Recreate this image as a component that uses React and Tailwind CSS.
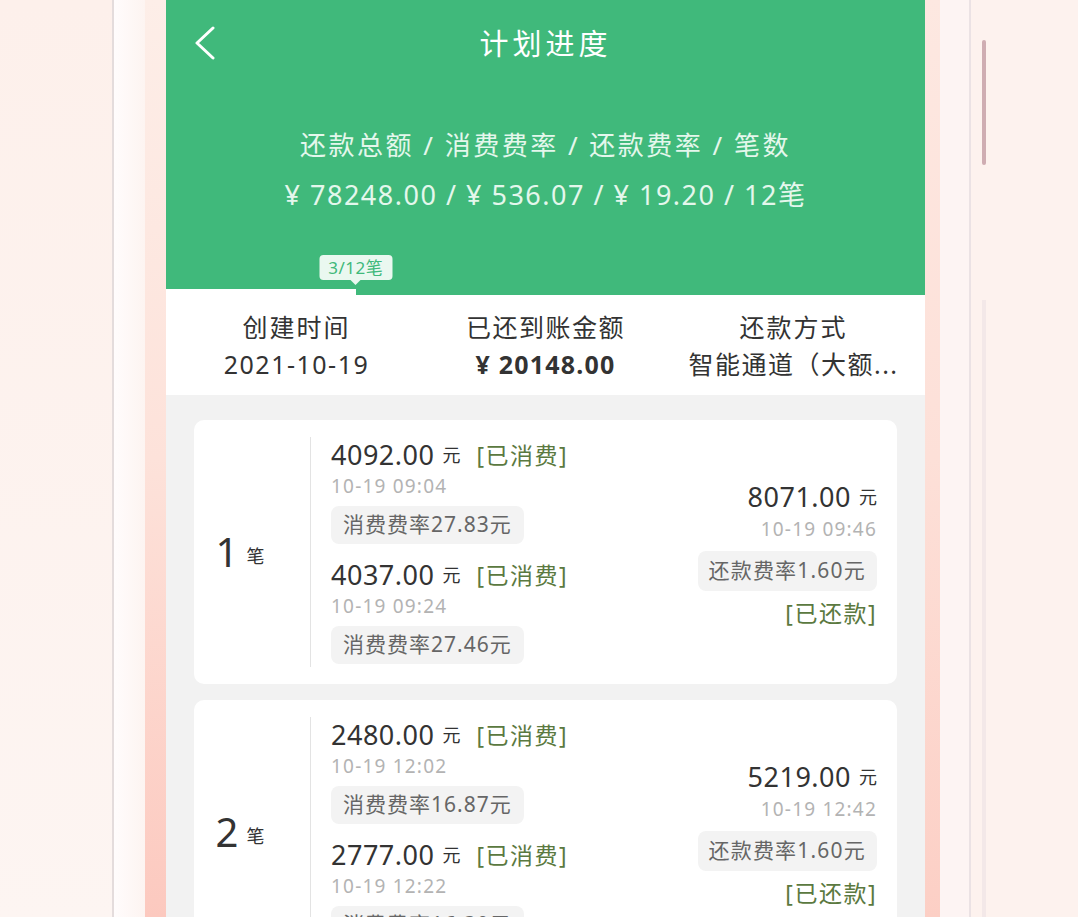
import React from 'react';

const records = [
    {
        no: 1,
        spends: [
            { amount: '4092.00', time: '10-19 09:04', fee: '27.83' },
            { amount: '4037.00', time: '10-19 09:24', fee: '27.46' },
        ],
        repay: { amount: '8071.00', time: '10-19 09:46', fee: '1.60' },
    },
    {
        no: 2,
        spends: [
            { amount: '2480.00', time: '10-19 12:02', fee: '16.87' },
            { amount: '2777.00', time: '10-19 12:22', fee: '16.30' },
        ],
        repay: { amount: '5219.00', time: '10-19 12:42', fee: '1.60' },
    },
];

function BackIcon() {
    return (
        <svg width="22" height="34" viewBox="0 0 22 34" fill="none">
            <polyline points="19,2 3,17 19,32" stroke="white" strokeWidth="3" strokeLinecap="round" strokeLinejoin="round" />
        </svg>
    );
}

function SpendItem({ item, first }) {
    return (
        <div className={first ? '' : 'mt-[14px]'}>
            <div className="flex items-center h-[34px]">
                <span className="text-[27px] text-[#333] tracking-[0.5px]">{item.amount}</span>
                <span className="text-[18px] text-[#333] ml-[8px]">元</span>
                <span className="text-[23px] text-[#5b7940] ml-[16px] tracking-[1.5px]">[已消费]</span>
            </div>
            <div className="h-[28px] flex items-center text-[19px] text-[#b3b3b3] tracking-[1.2px]">{item.time}</div>
            <div className="mt-[6px] inline-flex items-center h-[38px] px-[12px] rounded-[8px] bg-[#f3f3f3] text-[21px] text-[#666] tracking-[1px]">
                消费费率{item.fee}元
            </div>
        </div>
    );
}

function RecordCard({ record }) {
    return (
        <div className="bg-white rounded-[10px] h-[264px] shrink-0 flex items-stretch py-[17px] pr-[20px]">
            <div className="w-[116px] flex items-center justify-center pr-[24px] shrink-0">
                <span className="text-[40px] text-[#333] leading-none">{record.no}</span>
                <span className="text-[18px] text-[#333] ml-[8px] mt-[8px]">笔</span>
            </div>
            <div className="w-px bg-[#e3e3e3] shrink-0" />
            <div className="pl-[20px] pt-[1px] flex-1">
                {record.spends.map((s, i) => (
                    <SpendItem key={i} item={s} first={i === 0} />
                ))}
            </div>
            <div className="flex flex-col items-end justify-center pt-[8px]">
                <div className="flex items-center h-[34px]">
                    <span className="text-[27px] text-[#333] tracking-[0.5px]">{record.repay.amount}</span>
                    <span className="text-[18px] text-[#333] ml-[8px]">元</span>
                </div>
                <div className="h-[30px] flex items-center text-[19px] text-[#b3b3b3] tracking-[1.2px]">{record.repay.time}</div>
                <div className="mt-[6px] inline-flex items-center h-[40px] px-[11px] rounded-[8px] bg-[#f3f3f3] text-[21px] text-[#666] tracking-[1.2px]">
                    还款费率{record.repay.fee}元
                </div>
                <div className="mt-[5px] h-[36px] flex items-center text-[23px] text-[#5b7940] tracking-[1.5px]">[已还款]</div>
            </div>
        </div>
    );
}

export default function App() {
    return (
        <div className="h-[917px] w-[1078px] overflow-hidden flex bg-[#fdf2ee] font-['Noto_Sans','Noto_Sans_CJK_SC',sans-serif]">
            {/* left phone bezel */}
            <div className="w-[112px] shrink-0 bg-gradient-to-b from-[#fdf0eb] to-[#fdf5f2]" />
            <div className="w-[2px] shrink-0 bg-[#e4dcdc]" />
            <div className="w-[31px] shrink-0 bg-gradient-to-r from-[#fffcfc] to-[#fdf4f1]" />
            <div className="w-[21px] shrink-0 bg-gradient-to-b from-[#fdeee8] via-[#fde2da] to-[#fcc9bf]" />

            {/* screen */}
            <div className="w-[759px] shrink-0 bg-[#f2f2f2] flex flex-col">
                <div className="bg-[#40b97b] flex flex-col shrink-0">
                    <div className="h-[87px] relative flex items-center justify-center">
                        <div className="absolute left-[28px] top-[26px]">
                            <BackIcon />
                        </div>
                        <span className="text-[29px] text-white tracking-[4px]">计划进度</span>
                    </div>
                    <div className="mt-[40px] h-[36px] flex items-center justify-center text-[26px] text-[#e4f7ec] tracking-[2.5px] whitespace-nowrap">
                        还款总额 / 消费费率 / 还款费率 / 笔数
                    </div>
                    <div className="mt-[12px] h-[40px] flex items-center justify-center text-[27px] text-[#e4f7ec] tracking-[1.5px] whitespace-nowrap">
                        ¥ 78248.00 / ¥ 536.07 / ¥ 19.20 / 12笔
                    </div>
                    <div className="h-[74px]" />
                    <div className="h-[6px] flex relative">
                        <div className="w-1/4 bg-white" />
                        <div className="absolute left-1/4 bottom-[10px] -translate-x-1/2 flex flex-col items-center">
                            <div className="h-[25px] px-[9px] rounded-[4px] bg-[#eaf8f0] text-[#40b97b] text-[17px] tracking-[0.5px] flex items-center">
                                3/12笔
                            </div>
                            <div className="w-0 h-0 border-l-[5px] border-r-[5px] border-t-[5px] border-l-transparent border-r-transparent border-t-[#eaf8f0]" />
                        </div>
                    </div>
                </div>

                <div className="bg-white h-[100px] shrink-0 grid grid-cols-3 pt-[16px]">
                    <div className="flex flex-col items-center pl-[8px]">
                        <div className="h-[34px] flex items-center text-[25px] text-[#333] tracking-[2px]">创建时间</div>
                        <div className="mt-[3px] h-[34px] flex items-center text-[25px] text-[#333] tracking-[1.5px]">2021-10-19</div>
                    </div>
                    <div className="flex flex-col items-center">
                        <div className="h-[34px] flex items-center text-[25px] text-[#333] tracking-[1.5px]">已还到账金额</div>
                        <div className="mt-[3px] h-[34px] flex items-center text-[25px] text-[#333] font-bold tracking-[1.2px]">¥ 20148.00</div>
                    </div>
                    <div className="flex flex-col items-center pr-[10px]">
                        <div className="h-[34px] flex items-center text-[25px] text-[#333] tracking-[2px]">还款方式</div>
                        <div className="mt-[3px] h-[34px] flex items-center text-[25px] text-[#333] tracking-[1.5px] whitespace-nowrap">智能通道（大额...</div>
                    </div>
                </div>

                <div className="px-[28px] pt-[25px] flex flex-col gap-[16px]">
                    {records.map(r => (
                        <RecordCard key={r.no} record={r} />
                    ))}
                </div>
            </div>

            {/* right phone bezel */}
            <div className="w-[15px] shrink-0 bg-gradient-to-b from-[#fde8e1] via-[#fde0d8] to-[#fccfc5]" />
            <div className="w-[29px] shrink-0 bg-[#fdf4f3]" />
            <div className="w-[2px] shrink-0 bg-[#ebe2e4]" />
            <div className="w-[11px] shrink-0" />
            <div className="w-[4px] shrink-0 flex flex-col">
                <div className="h-[40px]" />
                <div className="h-[125px] bg-[#cfadb2] rounded-[2px]" />
                <div className="h-[135px]" />
                <div className="flex-1 bg-[#f3e8e8]" />
            </div>
            <div className="flex-1" />
        </div>
    );
}
